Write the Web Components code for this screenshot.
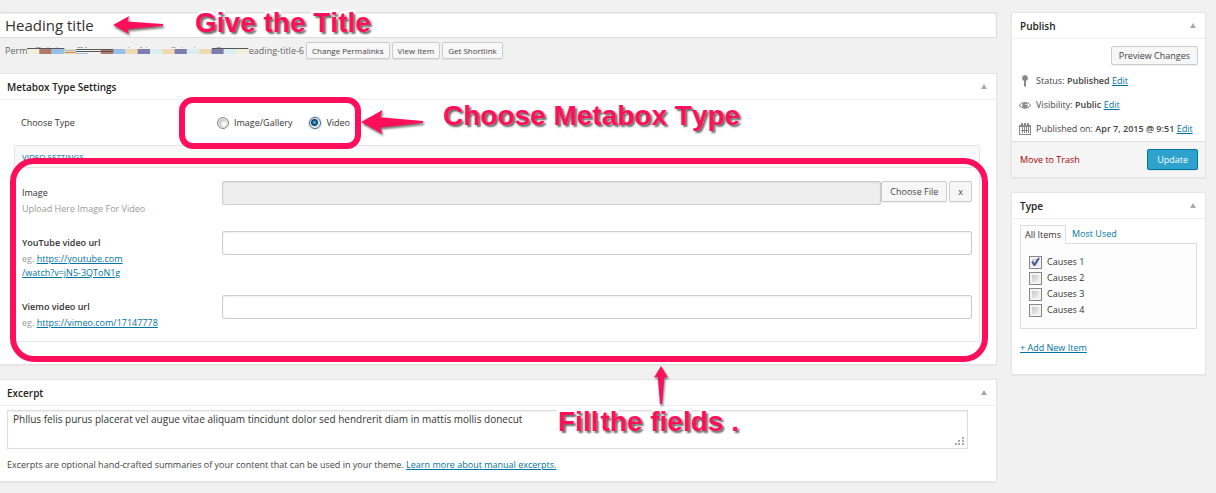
<!DOCTYPE html>
<html lang="en">
<head>
<meta charset="utf-8">
<title>Edit Item</title>
<style>
html,body{margin:0;background:#f1f1f1}
body{font:9px/16px "Open Sans",sans-serif;color:#444;overflow:hidden}
</style>
</head>
<body>
<edit-screen></edit-screen>
<script>
const define = (name, html, init) => {
  customElements.define(name, class extends HTMLElement {
    constructor() {
      super();
      this.attachShadow({ mode: 'open' }).innerHTML = html;
    }
    connectedCallback() { if (init) init(this, this.shadowRoot); }
  });
};

/* Pink callout text with a white outline */
define('call-out', `
<style>
:host{position:absolute;z-index:5;display:flex;font:bold 28px/32px "Liberation Sans",Arial,sans-serif;font-kerning:none;color:#ff0f5b;
 white-space:nowrap;-webkit-text-stroke:5px #fff;paint-order:stroke fill;text-shadow:2px 2px 2px rgba(0,0,0,.6);pointer-events:none}
</style><slot></slot>`);

/* Pink arrow, pointing left or up */
define('call-arrow', `
<style>
:host{position:absolute;z-index:4;pointer-events:none}
svg{display:block;overflow:visible;filter:drop-shadow(1px 2px 1px rgba(0,0,0,.55))}
</style><svg></svg>`, (el, root) => {
  const w = +el.getAttribute('width'), h = +el.getAttribute('height');
  const svg = root.querySelector('svg');
  svg.setAttribute('width', w);
  svg.setAttribute('height', h);
  svg.setAttribute('viewBox', `0 0 ${w} ${h}`);
  const up = el.getAttribute('to') === 'up';
  const d = up
    ? `M${w / 2} 0L${w} ${h * .3}L${w * .73} ${h * .28}L${w / 2 + 1} ${h}H${w / 2 - 1}L${w * .27} ${h * .28}L0 ${h * .3}Z`
    : `M0 ${h / 2}L${h * .9} 0L${h * .8} ${h * .3}L${w} ${h / 2 - 1}V${h / 2 + 1}L${h * .8} ${h * .73}L${h * .9} ${h}Z`;
  svg.innerHTML = `<path fill="#ff0f5b" d="${d}"/>`;
});

/* Rounded pink frame around what it lies over */
define('call-frame', `
<style>:host{position:absolute;z-index:3;box-sizing:border-box;border:6px solid #ff0f5b;border-radius:var(--r,14px);pointer-events:none}</style>`);

define('wp-button', `
<style>
:host{display:inline-block}
button{display:block;box-sizing:border-box;width:100%;height:var(--h,17px);padding:0 var(--p,5px);border:1px solid #ccc;border-radius:2px;
 background:#f7f7f7;color:#444;font:var(--fs,8px)/1 "Open Sans",sans-serif;white-space:nowrap;box-shadow:0 1px 0 rgba(0,0,0,.06)}
:host([primary]) button{background:#2ea2cc;border-color:#0074a2;color:#fff}
</style><button type="button"><slot></slot></button>`);

define('meta-box', `
<style>
:host{display:block;box-sizing:border-box;position:relative;background:#fff;border:1px solid #e5e5e5;box-shadow:0 1px 1px rgba(0,0,0,.04)}
:host([flush]){border-left:0}
header{display:flex;align-items:center;justify-content:space-between;height:25px;padding:0 9px 0 8px;border-bottom:1px solid #eee}
:host([flush]) header{padding-left:7px}
h2{margin:0;font:600 10px/16px "Open Sans",sans-serif;color:#222}
i{border:3px solid transparent;border-bottom:5px solid #aaa;border-top:0}
</style>
<header><h2></h2><i></i></header><slot></slot>`, (el, root) => {
  root.querySelector('h2').textContent = el.getAttribute('heading');
});

define('title-editor', `
<style>
:host{display:block;position:relative}
input{display:block;box-sizing:border-box;width:100%;height:26px;padding:0 5px;border:1px solid #ddd;border-left:0;background:#fff;
 box-shadow:inset 0 1px 2px rgba(0,0,0,.07);font:15px/24px "Open Sans",sans-serif;color:#333}
.row{display:flex;align-items:center;gap:2px;padding:4px 0 0 5px;height:17px}
.link{display:flex;align-items:center;width:299px;color:#666}
svg{flex:1;height:8px}
call-out{left:195px;top:-5px}
call-arrow{left:113px;top:4px}
</style>
<input value="Heading title" aria-label="Title">
<div class="row"><span class="link"><span>Perm</span>
<svg viewBox="0 0 225 8" preserveAspectRatio="none"></svg><span>eading-title-6</span></span>
<wp-button>Change Permalinks</wp-button><wp-button>View Item</wp-button><wp-button>Get Shortlink</wp-button></div>
<call-out>Give the Title</call-out><call-arrow width="50" height="18"></call-arrow>`, (el, root) => {
  const c = ['#f0efdb','#b07a68','#94c0ec','#efd9b0','#f1f1f1','#f1f1f1','#b07a68','#94c0ec','#efd9b0','#7f7caf','#d8eef0','#efd9b0','#7f7caf','#d8eef0','#efd9b0','#7f7caf','#d8eef0','#f0efdb'];
  root.querySelector('svg').innerHTML = c.map((f, i) => `<rect x="${i * 12.5}" y="2" width="12.600" height="5" fill="${f}"/>`).join('') +
    '<path stroke="#94c0ec" d="M38 3.500H50M50 6.500H62"/><path stroke="#c9935a" d="M38 5.500H50"/>' +
    '<path stroke="#555" d="M0 1.500H38M50 2.500H88M50 4.500H88M188 1.500H225"/>' +
    '<path stroke="#aaa" d="M9 .5h5M21 .5h1M30 .5h1M51 .5h6M59 .5h2M103 .5h1M115 .5h2M121 .5h1M147 .5h4M157 .5h1M170 .5h1M193 .5h4"/>';
});

define('type-chooser', `
<style>
:host{display:flex;align-items:center;position:relative;height:45px;padding-left:21px;color:#333}
.name{width:196px}
label{display:flex;align-items:center;gap:5px;margin-right:17px}
input{appearance:none;box-sizing:border-box;width:12px;height:12px;margin:0;border:1px solid #888;border-radius:50%;
 background:radial-gradient(circle at 60% 60%,#fff 1px,#ccc 4px);box-shadow:inset 0 0 0 1px #eee}
input:checked{border-color:#567;background:radial-gradient(circle at 45% 45%,#5cc8f0 0,#146a9c 2px,#0c3450 3px,#e8eef2 4px);box-shadow:0 0 2px #5b9dd9}
call-frame{left:179px;top:-3px;width:182px;height:52px}
call-arrow{left:361px;top:10px}
call-out{left:443px;top:0}
</style>
<span class="name">Choose Type</span>
<label><input type="radio" name="t">Image/Gallery</label>
<label><input type="radio" name="t" checked>Video</label>
<call-frame></call-frame><call-arrow width="62" height="24"></call-arrow><call-out>Choose Metabox Type</call-out>`);

define('video-settings', `
<style>
:host{display:block;position:relative;margin:0 16px 22px 14px;border:1px solid #e5e5e5;border-radius:2px;color:#999}
h3{margin:0;height:21px;padding-left:7px;background:#f9f9f9;border-bottom:1px solid #e5e5e5;font:8px/22px "Open Sans",sans-serif;color:#0074a2}
.fields{display:grid;grid-template-columns:200px 1fr;padding:13px 7px 0}
.fields>div{display:flex;align-items:start}
.fields>div:nth-child(2){height:50px}
.fields>div:nth-child(4){height:64px}
.fields>div:nth-child(6){height:46px}
.cap{flex-direction:column;padding-top:3px;line-height:14px}
.cap label{line-height:18px;color:#333}
.cap.b label{font-weight:600}
input{flex:1;min-width:0;box-sizing:border-box;height:24px;border:1px solid #ccc;border-radius:2px;background:#fff;box-shadow:inset 0 1px 2px rgba(0,0,0,.07)}
input[readonly]{background:#eee}
wp-button{--h:21px;--p:8px;--fs:9px}
wp-button+wp-button{margin-left:2px}
a{color:#0074a2}
call-frame{--r:24px;left:-5px;right:-9px;top:12px;bottom:-21px}
</style>
<h3>VIDEO SETTINGS</h3>
<div class="fields">
<div class="cap"><label for="a">Image</label><span>Upload Here Image For Video</span></div>
<div><input id="a" readonly><wp-button>Choose File</wp-button><wp-button>x</wp-button></div>
<div class="cap b"><label for="b">YouTube video url</label><span>eg. <a href="#">https://youtube.com<br>/watch?v=jN5-3QToN1g</a></span></div>
<div><input id="b"></div>
<div class="cap b"><label for="c">Viemo video url</label><span>eg. <a href="#">https://vimeo.com/17147778</a></span></div>
<div><input id="c"></div>
</div>
<call-frame></call-frame>`);

define('excerpt-editor', `
<style>
:host{display:block;position:relative;padding:4px 28px 8px 7px}
textarea{display:block;box-sizing:border-box;width:100%;height:39px;padding:1px 5px;border:1px solid #ddd;background:#fff;resize:vertical;overflow:hidden;
 box-shadow:inset 0 1px 2px rgba(0,0,0,.07);font:10px/15px "Open Sans",sans-serif;color:#333}
textarea::-webkit-resizer{background:
 conic-gradient(#aaa 0 0) 10px 4px/2px 2px no-repeat,
 conic-gradient(#aaa 0 0) 6px 7px/2px 2px no-repeat,conic-gradient(#aaa 0 0) 10px 7px/2px 2px no-repeat,
 conic-gradient(#aaa 0 0) 3px 10px/2px 2px no-repeat,conic-gradient(#aaa 0 0) 6px 10px/2px 2px no-repeat,conic-gradient(#aaa 0 0) 10px 10px/2px 2px no-repeat}
p{margin:8px 0 0;line-height:16px}
a{color:#0074a2}
call-arrow{left:654px;top:-40px}
call-out{left:558px;top:0;gap:2px}
</style>
<textarea aria-label="Excerpt">Phllus felis purus placerat vel augue vitae aliquam tincidunt dolor sed hendrerit diam in mattis mollis donecut</textarea>
<p>Excerpts are optional hand-crafted summaries of your content that can be used in your theme. <a href="#">Learn more about manual excerpts.</a></p>
<call-arrow to="up" width="14" height="38"></call-arrow><call-out><span>Fill</span><span>the fields .</span></call-out>`);

define('publish-panel', `
<style>
:host{display:block}
.top{display:flex;justify-content:flex-end;padding:7px 7px 0}
.top wp-button{--h:19px;--p:7px;--fs:9px}
ul{list-style:none;margin:0;padding:4px 0 0 7px}
li{display:flex;align-items:center;gap:5px;height:24px;white-space:nowrap}
svg{flex:none;width:12px;height:12px;fill:#888}
b{font-weight:600}
a{color:#0074a2}
footer{display:flex;align-items:center;justify-content:space-between;height:35px;padding:0 7px 0 8px;background:#f5f5f5;border-top:1px solid #ddd}
footer a{color:#a00;text-decoration:none}
footer wp-button{--h:21px;--p:9px;--fs:9px}
</style>
<div class="top"><wp-button>Preview Changes</wp-button></div>
<ul>
<li><svg viewBox="0 0 12 12"><path d="M6 0a3 3 0 0 1 1 5.800V11L6 12 5 11V5.800A3 3 0 0 1 6 0z"/></svg><span>Status: <b>Published</b> <a href="#">Edit</a></span></li>
<li><svg viewBox="0 0 12 12"><path d="M0 6.500Q6 0 12 6.500 6 12 0 6.500Z" fill="none" stroke="#888"/><circle cx="6" cy="6.500" r="2.700"/><circle cx="7" cy="5.500" r=".8" fill="#fff"/></svg><span>Visibility: <b>Public</b> <a href="#">Edit</a></span></li>
<li><svg viewBox="0 0 12 12"><path fill-rule="evenodd" d="M0 2h2V0h2v2h1V0h2v2h1V0h2v2h2v10H0zM1 4v7h10V4z"/><path d="M3 4h1v6H3zM5 4h1v6H5zM7 4h1v6H7zM9 4h1v6H9zM2 7h8v1H2z"/></svg><span>Published on: <b>Apr 7, 2015 @ 9:51</b> <a href="#">Edit</a></span></li>
</ul>
<footer><a href="#">Move to Trash</a><wp-button primary>Update</wp-button></footer>`);

define('type-panel', `
<style>
:host{display:block;padding:6px 8px 18px}
a{color:#0074a2}
nav{display:flex}
nav a{height:18px;padding:0 6px;line-height:18px;text-decoration:none}
nav a:first-child{position:relative;margin-bottom:-1px;padding:0 4px;border:1px solid #ddd;border-bottom:0;background:#fdfdfd;color:#333}
.list{display:flex;flex-direction:column;height:70px;padding:10px 8px 4px;border:1px solid #ddd;background:#fdfdfd;color:#333}
label{display:flex;align-items:center;gap:5px;height:16px}
input{appearance:none;box-sizing:border-box;width:13px;height:13px;margin:0;border:1px solid #888;background:linear-gradient(135deg,#bbb,#fff);box-shadow:inset 0 0 0 2px #f4f4f4}
label{position:relative}
svg{position:absolute;left:2px;top:3px;width:9px;height:9px;pointer-events:none}
p{margin:11px 0 0}
</style>
<nav><a href="#">All Items</a><a href="#">Most Used</a></nav>
<div class="list">
<label><input type="checkbox" checked><svg viewBox="0 0 9 9"><path d="M1 4.500 3.500 8 8 1" fill="none" stroke="#4357a0" stroke-width="2"/></svg>Causes 1</label>
<label><input type="checkbox">Causes 2</label>
<label><input type="checkbox">Causes 3</label>
<label><input type="checkbox">Causes 4</label>
</div>
<p><a href="#">+ Add New Item</a></p>`);

define('edit-screen', `
<style>
:host{display:grid;grid-template-columns:1fr 195px;gap:14px;align-items:start;padding:12px 10px 10px 0}
main,aside{display:flex;flex-direction:column;gap:14px;min-width:0}
</style>
<main>
<title-editor></title-editor>
<meta-box flush heading="Metabox Type Settings"><type-chooser></type-chooser><video-settings></video-settings></meta-box>
<meta-box flush heading="Excerpt"><excerpt-editor></excerpt-editor></meta-box>
</main>
<aside>
<meta-box heading="Publish"><publish-panel></publish-panel></meta-box>
<meta-box heading="Type"><type-panel></type-panel></meta-box>
</aside>`);
</script>
</body>
</html>
